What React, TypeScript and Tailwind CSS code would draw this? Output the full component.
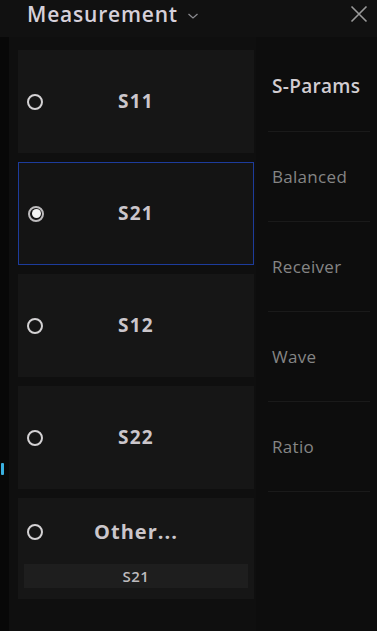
import React from "react";

const font = { fontFamily: '"Open Sans", "Noto Sans", sans-serif' };

const items = [
  { id: "S11", selected: false },
  { id: "S21", selected: true },
  { id: "S12", selected: false },
  { id: "S22", selected: false },
];

const categories = ["S-Params", "Balanced", "Receiver", "Wave", "Ratio"];

const Radio = ({ checked }: { checked: boolean }) => (
  <span
    className={
      "w-[16px] h-[16px] rounded-full border-2 flex items-center justify-center shrink-0 " +
      (checked ? "border-[#bdbbbd]" : "border-[#d4d2d4]")
    }
  >
    {checked && <span className="w-[9px] h-[9px] rounded-full bg-[#f4f4f4]" />}
  </span>
);

export default function App() {
  return (
    <div style={font} className="w-[377px] h-[631px] bg-[#0d0d0d] flex flex-col overflow-hidden relative">
      <div className="h-[37px] bg-[#111111] flex items-start pt-[2px] pl-[27px] pr-[9px] shrink-0">
        <span className="text-[21px] font-semibold text-[#d6d0da] tracking-[0.8px] leading-[24px]">
          Measurement
        </span>
        <svg width="12" height="8" viewBox="0 0 12 8" className="ml-[9px] mt-[10px]">
          <path d="M1.5 2 L6 6 L10.5 2" stroke="#8a8a8f" strokeWidth="1.3" fill="none" />
        </svg>
        <svg width="18" height="18" viewBox="0 0 18 18" className="ml-auto mt-[3px]">
          <path d="M1.5 1.5 L16.5 16.5 M16.5 1.5 L1.5 16.5" stroke="#9a9a9a" strokeWidth="1.6" />
        </svg>
      </div>

      <div className="flex flex-1">
        <div className="w-[9px] bg-[#080808]" />
        <div className="w-[247px] bg-[#0f0f0f] pl-[9px] pr-[2px] pt-[13px] flex flex-col gap-[9px]">
          {items.map((it) => (
            <div
              key={it.id}
              className={
                "h-[103px] flex items-center px-[9px] " +
                (it.selected ? "bg-[#141414] border border-[#1d3c9c]" : "bg-[#161616]")
              }
            >
              <Radio checked={it.selected} />
              <span className="flex-1 text-center text-[19px] font-bold text-[#cbc6cb] tracking-[1.2px]">
                {it.id}
              </span>
              <span className="w-[16px]" />
            </div>
          ))}
          <div className="h-[101px] bg-[#161616] flex flex-col px-[6px]">
            <div className="flex items-center px-[3px] h-[66px] pt-[2px]">
              <Radio checked={false} />
              <span className="flex-1 text-center text-[20px] font-bold text-[#cbc6cb] tracking-[1px]">
                Other...
              </span>
              <span className="w-[16px]" />
            </div>
            <div className="h-[24px] bg-[#1e1e1e] flex items-center justify-center text-[15px] font-semibold text-[#bdbabd] tracking-[0.5px]">
              S21
            </div>
          </div>
        </div>
        <div className="flex-1 flex flex-col pt-[5px]">
          {categories.map((c, i) => (
            <div key={c} className="h-[90px] flex flex-col">
              <div className="flex-1 flex items-center pl-[16px]">
                <span
                  className={
                    i === 0
                      ? "text-[19px] font-semibold text-[#d2cdd2] tracking-[0.3px]"
                      : "text-[17px] font-medium text-[#858585] tracking-[0.3px]"
                  }
                >
                  {c}
                </span>
              </div>
              <div className="h-px bg-[#1a1a1a] ml-[12px] mr-[7px]" />
            </div>
          ))}
        </div>
      </div>

      <div className="absolute left-[1px] top-[463px] w-[3px] h-[12px] bg-[#3ab0e0] rounded-[1px]" />
    </div>
  );
}
